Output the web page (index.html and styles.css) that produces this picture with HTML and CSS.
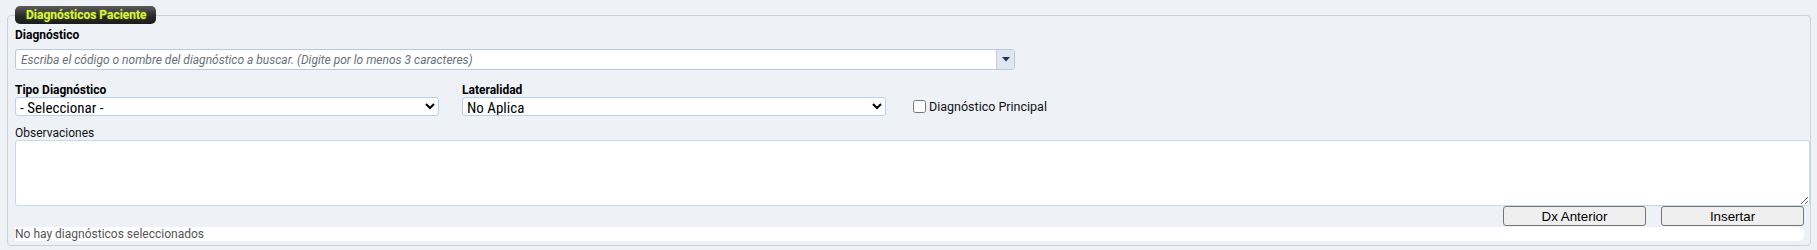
FILE: index.html
```html
<!DOCTYPE html>
<html lang="es">
<head>
<meta charset="utf-8">
<title>Diagnósticos Paciente</title>
<link rel="stylesheet" href="styles.css">
</head>
<body>
<fieldset class="panel">
  <legend class="panel-title">Diagnósticos Paciente</legend>

  <div class="field field-diag">
    <label class="lbl-main">Diagnóstico</label>
    <div class="combo">
      <input class="combo-input" type="text" placeholder="Escriba el código o nombre del diagnóstico a buscar. (Digite por lo menos 3 caracteres)">
      <span class="combo-btn">
        <svg width="8" height="5" viewBox="0 0 8 5"><path d="M0 0H8L4 4.5Z" fill="#22344d"/></svg>
      </span>
    </div>
  </div>

  <div class="row3">
    <div class="col">
      <label class="lbl-sub">Tipo Diagnóstico</label>
      <select class="sel">
        <option>- Seleccionar -</option>
      </select>
    </div>
    <div class="col">
      <label class="lbl-sub">Lateralidad</label>
      <select class="sel">
        <option>No Aplica</option>
      </select>
    </div>
    <label class="check"><input type="checkbox" class="check-box"><span>Diagnóstico Principal</span></label>
  </div>

  <div class="field field-obs">
    <label class="lbl-plain">Observaciones</label>
    <textarea class="obs"></textarea>
  </div>

  <div class="actions">
    <button class="btn" type="button">Dx Anterior</button>
    <button class="btn" type="button">Insertar</button>
  </div>

  <div class="empty">No hay diagnósticos seleccionados</div>
</fieldset>
</body>
</html>
```

FILE: styles.css
```css
html, body {
  margin: 0;
  padding: 0;
  background: #eef2f6;
}

body {
  font-family: Roboto, "Liberation Sans", sans-serif;
  font-size: 12px;
  color: #000;
}

.panel {
  margin: 6px 6px 0 7px;
  padding: 4px 6px 4px 7px;
  border: 1px solid #cdd2d8;
  border-radius: 4px;
  background: #eef2f6;
  min-width: 0;
}

.panel-title {
  height: 18px;
  line-height: 18px;
  padding: 0 9px 0 11px;
  border-radius: 5px;
  background: linear-gradient(#5c5c5c, #2a2a2a 55%, #1c1c1c);
  color: #d6f53c;
  font-weight: bold;
  font-size: 12px;
  text-shadow: 0 0 2px rgba(214, 245, 60, 0.45);
}

.field {
  display: flex;
  flex-direction: column;
}

.lbl-main {
  font-weight: bold;
  font-size: 12px;
  line-height: 14px;
  margin-bottom: 7px;
}

.combo {
  display: flex;
  width: 1000px;
  height: 21px;
  box-sizing: border-box;
  border: 1px solid #bccad8;
  border-radius: 3px;
  background: #fff;
}

.combo-input {
  flex: 1;
  min-width: 0;
  border: 0;
  outline: 0;
  padding: 0 5px;
  background: transparent;
  font-family: Roboto, sans-serif;
  font-size: 12px;
}

.combo-input::placeholder {
  color: #69717a;
  font-style: italic;
}

.combo-btn {
  width: 17px;
  display: flex;
  align-items: center;
  justify-content: center;
  background: #dde6f1;
  border-left: 1px solid #c6cfd9;
  border-radius: 0 2px 2px 0;
}

.row3 {
  display: grid;
  grid-template-columns: 424px 424px auto;
  column-gap: 23px;
  margin-top: 13px;
  align-items: end;
}

.col {
  display: flex;
  flex-direction: column;
}

.lbl-sub {
  font-weight: bold;
  font-size: 12px;
  line-height: 14px;
}

.sel {
  height: 19px;
  box-sizing: border-box;
  border: 1px solid #b7d4ec;
  border-radius: 3px;
  background: #fff;
  font-family: "Roboto Condensed", Roboto, sans-serif;
  font-stretch: condensed;
  font-size: 15px;
  color: #000;
  padding: 0;
}

.check {
  display: flex;
  align-items: center;
  justify-self: start;
  margin-left: 4px;
  height: 19px;
  font-size: 12.5px;
  color: #111;
}

.check-box {
  width: 13px;
  height: 13px;
  margin: 0 3px 0 0;
}

.field-obs {
  margin-top: 10px;
}

.lbl-plain {
  font-size: 12px;
  line-height: 14px;
  color: #111;
}

.obs {
  width: 100%;
  height: 60px;
  padding: 2px;
  margin: 0;
  border: 1px solid #bfdcef;
  border-radius: 3px;
  background: #fff;
  resize: vertical;
  font-family: Roboto, sans-serif;
  font-size: 12px;
}

.actions {
  display: flex;
  justify-content: flex-end;
  gap: 15px;
}

.btn {
  width: 143px;
  height: 20px;
  padding: 0;
  border: 1px solid #767676;
  border-radius: 3px;
  background: #efefef;
  font-family: "Liberation Sans", Arial, sans-serif;
  font-size: 13.333px;
  color: #000;
}

.empty {
  margin-top: 1px;
  height: 14px;
  line-height: 14px;
  background: #fff;
  border-radius: 0 6px 6px 0;
  color: #555;
  font-size: 12px;
}
```
